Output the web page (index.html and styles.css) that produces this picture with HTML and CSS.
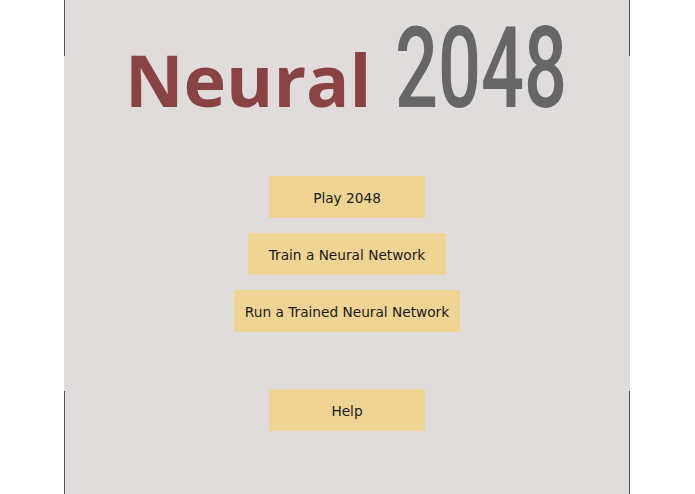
FILE: index.html
```html
<!DOCTYPE html>
<html lang="en">
<head>
    <meta charset="UTF-8">
    <meta name="viewport" content="width=device-width, initial-scale=1.0">
    <title>Neural 2048</title>
    <link rel="stylesheet" href="styles.css">
</head>
<body>
    <div class="menu">
        <h1 class="title">
            <span class="title-neural">Neural</span>
            <span class="title-num"><span>2048</span></span>
        </h1>
        <div class="buttons">
            <button class="btn">Play 2048</button>
            <button class="btn btn-wide">Train a Neural Network</button>
            <button class="btn btn-widest">Run a Trained Neural Network</button>
            <button class="btn btn-help">Help</button>
        </div>
    </div>
</body>
</html>
```

FILE: styles.css
```css
body {
    margin: 0;
    background-color: #fff;
    font-family: "DejaVu Sans", Verdana, sans-serif;
}
.menu {
    box-sizing: border-box;
    width: 566px;
    min-height: 100vh;
    margin-left: 64px;
    background-color: #e1dcdc;
    border-left: 1px solid #555;
    border-right: 1px solid #555;
    /* edge lines only show at the top and bottom */
    border-image: linear-gradient(to bottom, #555 0 57px, transparent 57px 390px, #555 390px) 1;
}
.title {
    display: flex;
    align-items: baseline;
    gap: 23px;
    margin: 0;
    padding: 12px 0 0 60px;
    line-height: 1;
    font-weight: normal;
}
.title-neural {
    font-family: "Open Sans", sans-serif;
    font-weight: 700;
    font-size: 72px;
    color: #8a4343;
}
.title-num {
    display: inline-block;
    width: 170px;
    font-family: Roboto, sans-serif;
    font-weight: 500;
    font-size: 113px;
    color: #666;
}
.title-num span {
    display: inline-block;
    transform: scaleX(0.67);
    transform-origin: left;
}
.buttons {
    display: flex;
    flex-direction: column;
    align-items: center;
    gap: 15px;
    margin-top: 51px;
}
.btn {
    width: 156px;
    height: 42px;
    padding: 2px 0 0;
    border: none;
    background-color: #f0d493;
    color: #1a1a1a;
    font-family: "DejaVu Sans", Verdana, sans-serif;
    font-size: 13.7px;
    cursor: pointer;
}
.btn-wide {
    width: 198px;
}
.btn-widest {
    width: 226px;
}
.btn-help {
    margin-top: 42px;
}
```
